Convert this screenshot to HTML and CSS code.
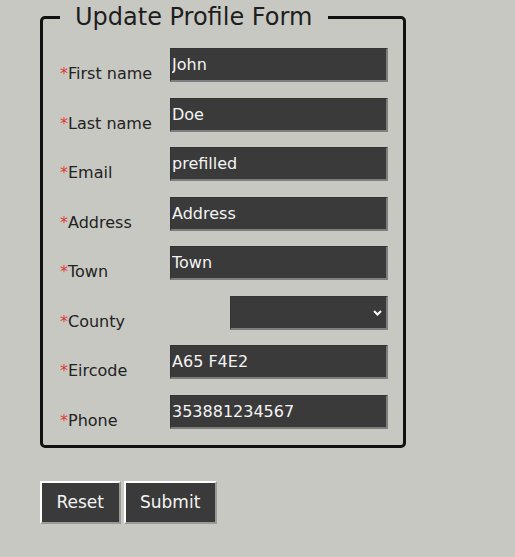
FILE: index.html
```html
<!DOCTYPE html>
<html lang="en">
<head>
<meta charset="utf-8">
<title>Update Profile Form</title>
<link rel="stylesheet" href="styles.css">
</head>
<body>
<form class="page">
  <fieldset class="box">
    <legend class="title">Update Profile Form</legend>
    <div class="grid">
      <label class="lbl" for="fn"><span class="req">*</span>First name</label>
      <input class="field" id="fn" type="text" value="John">
      <label class="lbl" for="ln"><span class="req">*</span>Last name</label>
      <input class="field" id="ln" type="text" value="Doe">
      <label class="lbl" for="em"><span class="req">*</span>Email</label>
      <input class="field" id="em" type="text" value="prefilled">
      <label class="lbl" for="ad"><span class="req">*</span>Address</label>
      <input class="field" id="ad" type="text" value="Address">
      <label class="lbl" for="tw"><span class="req">*</span>Town</label>
      <input class="field" id="tw" type="text" value="Town">
      <label class="lbl" for="co"><span class="req">*</span>County</label>
      <div class="sel-wrap">
        <select class="field sel" id="co"><option></option></select>
        <svg class="chev" width="9" height="6" viewBox="0 0 9 6"><path d="M1 1 L4.5 4.5 L8 1" fill="none" stroke="#fff" stroke-width="2"/></svg>
      </div>
      <label class="lbl" for="ec"><span class="req">*</span>Eircode</label>
      <input class="field" id="ec" type="text" value="A65 F4E2">
      <label class="lbl" for="ph"><span class="req">*</span>Phone</label>
      <input class="field" id="ph" type="text" value="353881234567">
    </div>
  </fieldset>
  <div class="actions">
    <button class="btn" type="reset">Reset</button>
    <button class="btn" type="submit">Submit</button>
  </div>
</form>
</body>
</html>
```
FILE: styles.css
```css
html, body {
  margin: 0;
  background: #c8c8c3;
  font-family: "DejaVu Sans", Verdana, sans-serif;
  color: #222;
}
.page {
  padding: 3px 0 0 40px;
  margin: 0;
}
.box {
  width: 366px;
  box-sizing: border-box;
  margin: 0;
  border: 3px solid #111;
  border-radius: 5px;
  padding: 17px 15px 16px 17px;
}
.title {
  font-size: 24px;
  padding: 0 16px 0 15px;
  color: #1e1e1e;
  line-height: 28px;
}
.grid {
  display: grid;
  grid-template-columns: 110px 218px;
  row-gap: 15.57px;
}
.lbl {
  box-sizing: border-box;
  height: 34px;
  font-size: 16px;
  padding-top: 17px;
  line-height: 18.6px;
  white-space: nowrap;
}
.req {
  color: #e03a3a;
}
.field {
  box-sizing: border-box;
  width: 218px;
  height: 34px;
  margin: 0;
  background: #3a3a3a;
  color: #f4f4f4;
  font-family: "DejaVu Sans", Verdana, sans-serif;
  font-size: 16px;
  border-style: solid;
  border-width: 1px 2px 2px 1px;
  border-color: #333 #7e7e7e #7e7e7e #333;
  padding: 0 0 0 1px;
  outline: none;
}
.sel-wrap {
  position: relative;
  display: flex;
  justify-content: flex-end;
}
.sel {
  width: 158px;
  appearance: none;
  -webkit-appearance: none;
  border-radius: 0;
}
.chev {
  position: absolute;
  right: 6px;
  top: 14px;
  pointer-events: none;
}
.actions {
  display: flex;
  gap: 3px;
  margin-top: 33px;
}
.btn {
  height: 43px;
  box-sizing: border-box;
  padding: 0 14.5px;
  background: #3a3a3a;
  color: #f4f4f4;
  font-family: "DejaVu Sans", Verdana, sans-serif;
  font-size: 17px;
  border-style: solid;
  border-width: 2px;
  border-color: #fff #9a9a9a #9a9a9a #fff;
  border-radius: 0;
}
```
